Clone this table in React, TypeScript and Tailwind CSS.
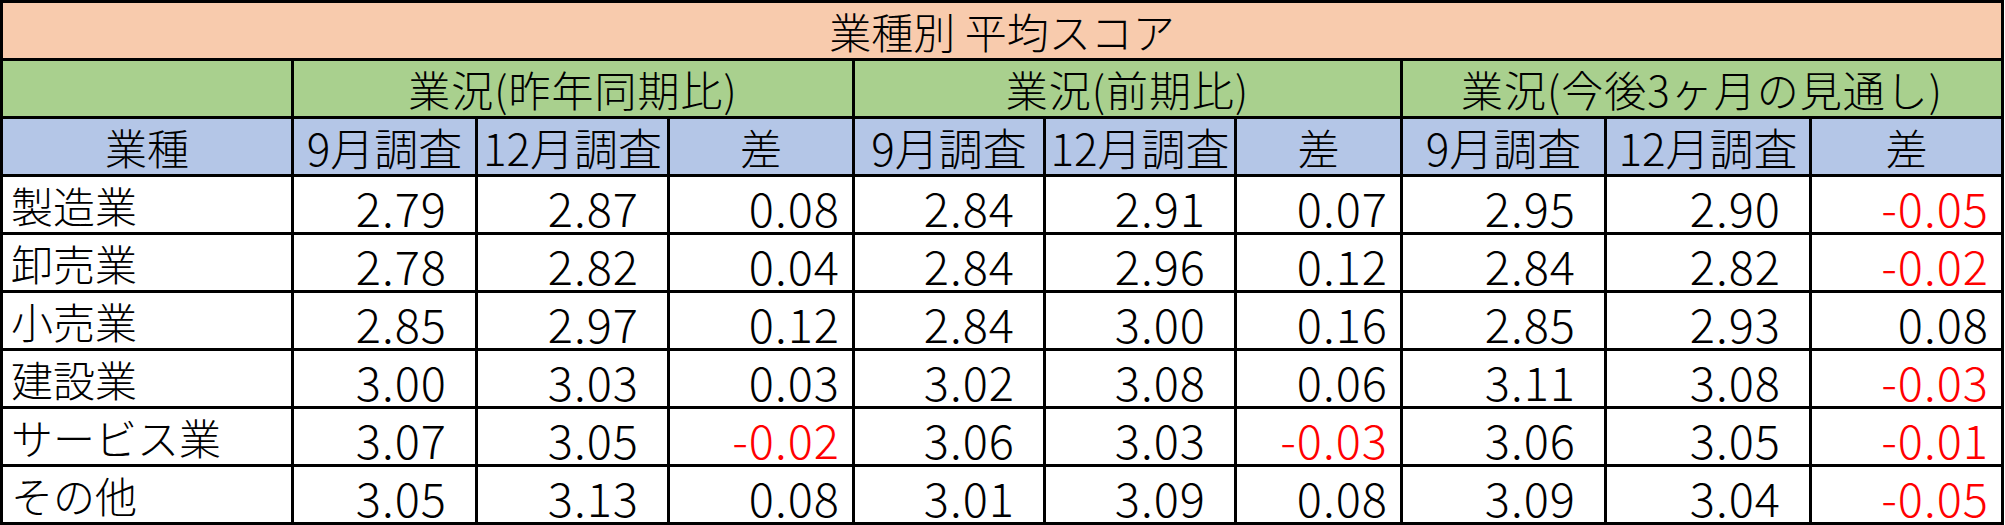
const rows: [string, string[]][] = [
  ["製造業", ["2.79", "2.87", "0.08", "2.84", "2.91", "0.07", "2.95", "2.90", "-0.05"]],
  ["卸売業", ["2.78", "2.82", "0.04", "2.84", "2.96", "0.12", "2.84", "2.82", "-0.02"]],
  ["小売業", ["2.85", "2.97", "0.12", "2.84", "3.00", "0.16", "2.85", "2.93", "0.08"]],
  ["建設業", ["3.00", "3.03", "0.03", "3.02", "3.08", "0.06", "3.11", "3.08", "-0.03"]],
  ["サービス業", ["3.07", "3.05", "-0.02", "3.06", "3.03", "-0.03", "3.06", "3.05", "-0.01"]],
  ["その他", ["3.05", "3.13", "0.08", "3.01", "3.09", "0.08", "3.09", "3.04", "-0.05"]],
];

const groups = ["業況(昨年同期比)", "業況(前期比)", "業況(今後3ヶ月の見通し)"];

export default function App() {
  return (
    <div className="w-[2005px] h-[525px] bg-white font-['Noto_Sans_CJK_JP',sans-serif] font-light text-[42px] text-black">
      <div className="grid w-[2004px] grid-cols-[288px_181px_189px_182px_188px_188px_163px_201px_202px_189px] auto-rows-[55px] gap-[3px] bg-black p-[3px]">
        {/* title */}
        <div className="col-span-10 flex items-center justify-center bg-[#f8cbad] leading-none">
          業種別 平均スコア
        </div>

        {/* group headers */}
        <div className="bg-[#a9d08e]" />
        {groups.map((g) => (
          <div
            key={g}
            className="col-span-3 flex items-center justify-center bg-[#a9d08e] leading-none tracking-[1px]"
          >
            {g}
          </div>
        ))}

        {/* column headers */}
        <div className="flex items-center justify-center bg-[#b4c6e7] leading-none">業種</div>
        {groups.map((g) => (
          <div key={g} className="contents">
            <div className="flex items-center justify-center bg-[#b4c6e7] text-[44px] leading-none">9月調査</div>
            <div className="flex items-center justify-center bg-[#b4c6e7] text-[44px] leading-none">12月調査</div>
            <div className="flex items-center justify-center bg-[#b4c6e7] leading-none">差</div>
          </div>
        ))}

        {/* data */}
        {rows.map(([name, vals]) => (
          <div key={name} className="contents">
            <div className="flex items-center bg-white pl-2 leading-none">{name}</div>
            {vals.map((v, i) => (
              <div
                key={i}
                className={`flex items-center justify-end bg-white pt-1 text-[47px] leading-none tracking-[1px] ${
                  i % 3 === 2 ? "pr-3" : "pr-7"
                } ${v.startsWith("-") ? "text-[#ff0000]" : ""}`}
              >
                {v}
              </div>
            ))}
          </div>
        ))}
      </div>
    </div>
  );
}
